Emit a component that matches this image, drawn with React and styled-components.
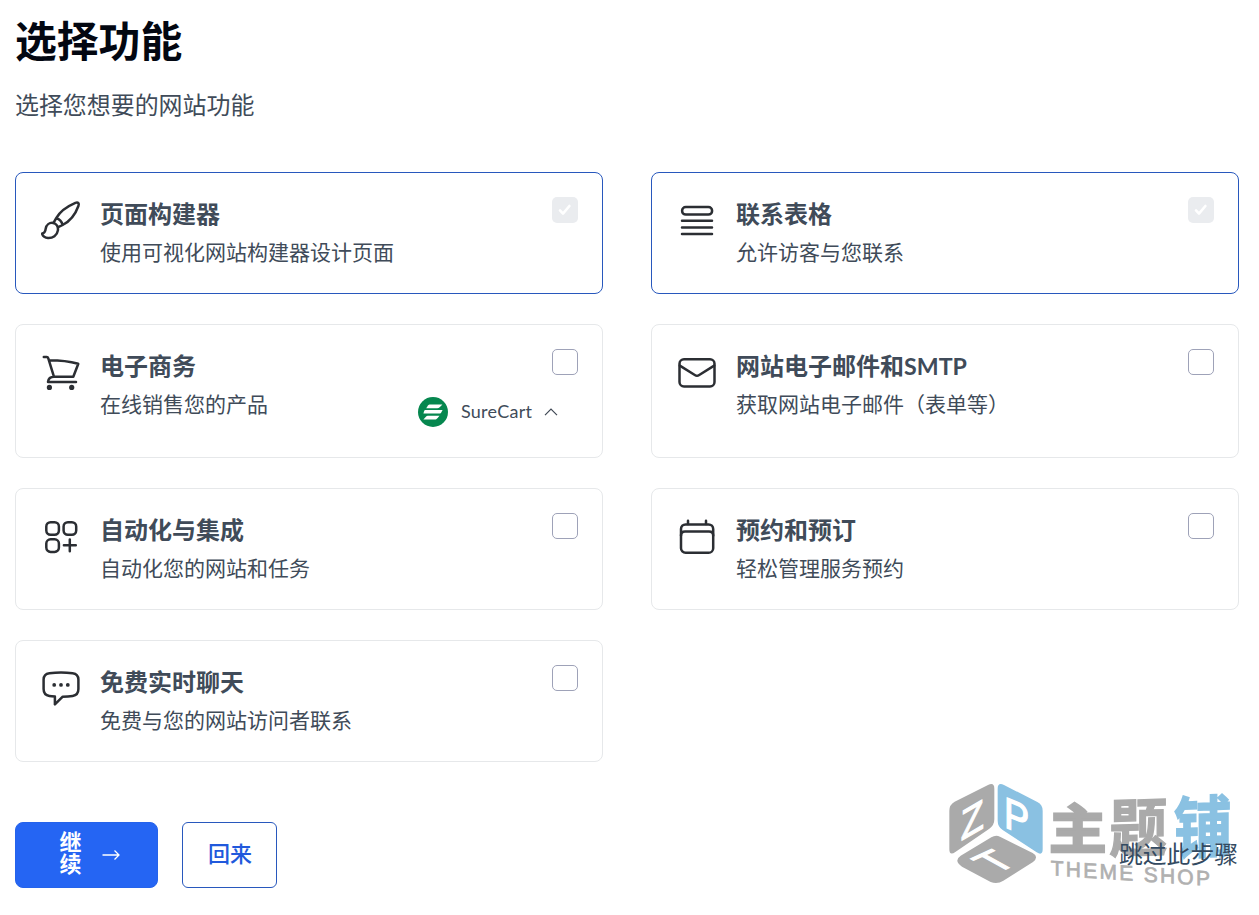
import React, { Component } from 'react'
import styled, { createGlobalStyle, css } from 'styled-components'

const GlobalStyle = createGlobalStyle`
  * {
    box-sizing: border-box;
  }

  body {
    margin: 0;
    background-color: #fff;
    font-family: Lato, 'Noto Sans CJK SC', sans-serif;
    color: #404b59;
  }
`

const Page = styled.main`
  position: relative;
  width: 1259px;
  height: 915px;
  padding: 16px 20px 0 15px;
  overflow: hidden;
`

const Title = styled.h1`
  margin: 0;
  color: #030711;
  font-size: 41.8px;
  font-weight: 700;
  line-height: 50px;
`

const Subtitle = styled.p`
  margin: 22px 0 50px;
  font-size: 23.95px;
  line-height: 34px;
`

const FeatureGrid = styled.div`
  display: grid;
  grid-template-columns: 588px 588px;
  grid-template-rows: 122px 134px 122px 122px;
  gap: 30px 48px;
`

const Card = styled.section`
  display: flex;
  padding: 24px;
  border: 1px solid ${props => (props.$active ? '#2858bd' : '#e6e8ea')};
  border-radius: 8px;
`

const CardIcon = styled.svg`
  flex-shrink: 0;
  width: 40px;
  height: 40px;
  margin: 3px 19px 0 1px;
  fill: none;
  stroke: #2b2e33;
  stroke-width: 2.5;
  stroke-linecap: round;
  stroke-linejoin: round;

  .solid {
    fill: #2b2e33;
    stroke: none;
  }
`

const CardBody = styled.div`
  flex: 1;
  white-space: nowrap;
`

const CardTitle = styled.h2`
  margin: 0;
  font-size: 24px;
  font-weight: 700;
  line-height: 34px;
`

const Latin = styled.span`
  font-size: 23.2px;
`

const CardText = styled.p`
  margin: 5px 0 0;
  font-size: 21px;
  line-height: 32px;
`

const CardSide = styled.div`
  display: flex;
  flex-direction: column;
  align-items: flex-end;
`

const CheckBox = styled.span`
  display: flex;
  align-items: center;
  justify-content: center;
  width: 26px;
  height: 26px;
  border-radius: 5px;
  ${props =>
    props.$checked
      ? css`
          background-color: #eaecef;
        `
      : css`
          border: 1px solid #9ea2b8;
        `}
`

const Provider = styled.div`
  display: flex;
  align-items: center;
  height: 30px;
  margin: 22px 20px 0 0;
  font-size: 18px;
  line-height: 28px;
`

const ProviderName = styled.span`
  width: 71px;
  margin: -2px 12px 0 13px;
  letter-spacing: 0.25px;
`

const Actions = styled.footer`
  display: flex;
  align-items: center;
  margin-top: 60px;
`

const Button = styled.button`
  display: flex;
  align-items: center;
  justify-content: center;
  height: 66px;
  padding: 0 0 7px 1px;
  border: 1px solid #2563eb;
  border-radius: 8px;
  font-family: inherit;
  font-size: 22px;
  font-weight: 500;
`

const NextButton = styled(Button)`
  width: 143px;
  gap: 20px;
  padding: 0 0 0 6px;
  background-color: #2565f3;
  color: #fff;
`

const NextLabel = styled.span`
  width: 22px;
  margin-bottom: 4px;
  line-height: 22px;
  font-weight: 700;
`

const BackButton = styled(Button)`
  width: 95px;
  margin-left: 24px;
  border-color: #2858bd;
  border-radius: 6px;
  background-color: #fff;
  color: #2159dc;
`

const SkipLink = styled.a`
  position: relative;
  z-index: 1;
  margin: 0 1px 2px auto;
  font-size: 23.8px;
  line-height: 34px;
  color: #334a61;
`

const Watermark = styled.svg`
  position: absolute;
  left: 930px;
  top: 770px;
  width: 329px;
  height: 130px;
  font-family: 'Liberation Sans', 'Noto Sans CJK SC', sans-serif;
`

const icons = {
  brush: (
    <>
      <path d="M15.2 18.2 C19 11.5 26 6.5 34.4 2.9 C37.3 1.9 38.4 3.6 37.4 6 C34.4 14.3 29.6 21 21.6 25 L17.2 27.2 M15.2 18.2 L12.8 22.4 M15.2 18.2 C18.6 19 20.8 21.4 21.6 25" />
      <path d="M1 33.6 C3.7 33.4 4.4 31.6 4.7 28.7 C5.3 24.8 8.5 22.5 12 22.9 C15.4 23.3 17.4 26.5 16.9 30.3 C16.2 35.4 11.7 38.2 7 38 C4 37.8 1.8 36.3 1 33.6 Z" />
    </>
  ),
  form: (
    <>
      <rect x="5.1" y="7.1" width="30" height="7.5" rx="3.7" />
      <path d="M5 20.8 H35 M5 27.4 H35 M5 34 H35" />
    </>
  ),
  cart: (
    <>
      <path d="M2.8 4.9 H5.7 C6.7 4.9 7 5.3 7.3 6.3 L13 24.8 H32.3 L37.3 11.8 C28 9.3 18.5 8.3 8.7 8.3 M13 24.8 C9.8 24.8 7.4 26.8 7 30 H35" />
      <circle className="solid" cx="8.4" cy="35.4" r="2.6" />
      <circle className="solid" cx="30.7" cy="35.4" r="2.6" />
    </>
  ),
  mail: (
    <>
      <rect x="2.5" y="7.2" width="35" height="27.2" rx="4.5" />
      <path d="M2.8 13.6 L17.8 23 C19.3 24 20.7 24 22.2 23 L37.2 13.6" />
    </>
  ),
  apps: (
    <>
      <rect x="5.3" y="6.2" width="12.6" height="12.6" rx="4.3" />
      <rect x="22.6" y="6.2" width="12.6" height="12.6" rx="4.3" />
      <rect x="5.3" y="23.3" width="12.6" height="12.6" rx="4.3" />
      <path d="M28.8 23.4 V35.3 M22.9 29.2 H34.8" />
    </>
  ),
  calendar: (
    <>
      <path d="M11 4.8 V8 M29 4.8 V8" />
      <rect x="4" y="8.4" width="32.2" height="28.4" rx="4.6" />
      <path d="M4 19.5 C4 16.9 5.4 15.6 8 15.6 H32 C34.8 15.6 36.2 16.9 36.2 19.5" />
    </>
  ),
  chat: (
    <>
      <path d="M8.4 5.2 C16 4.3 24 4.3 31.6 5.2 C35.2 5.7 37.4 8 37.4 11.6 V21 C37.4 25 35.2 27.4 31.6 27.9 C28.2 28.4 25 28.6 21.7 28.7 L13.9 36.4 V28.6 C12 28.4 10.2 28.2 8.4 27.9 C4.8 27.4 2.6 25 2.6 21 V11.6 C2.6 8 4.8 5.7 8.4 5.2 Z" />
      <circle className="solid" cx="13.2" cy="16.9" r="1.9" />
      <circle className="solid" cx="20" cy="16.9" r="1.9" />
      <circle className="solid" cx="26.8" cy="16.9" r="1.9" />
    </>
  )
}

const features = [
  { icon: 'brush', title: '页面构建器', text: '使用可视化网站构建器设计页面', checked: true },
  { icon: 'form', title: '联系表格', text: '允许访客与您联系', checked: true },
  { icon: 'cart', title: '电子商务', text: '在线销售您的产品', provider: 'SureCart' },
  { icon: 'mail', title: '网站电子邮件和', latin: 'SMTP', text: '获取网站电子邮件（表单等）' },
  { icon: 'apps', title: '自动化与集成', text: '自动化您的网站和任务' },
  { icon: 'calendar', title: '预约和预订', text: '轻松管理服务预约' },
  { icon: 'chat', title: '免费实时聊天', text: '免费与您的网站访问者联系' }
]

const ProviderSelect = ({ name }) => (
  <Provider>
    <svg width="30" height="30" viewBox="0 0 30 30">
      <circle cx="15" cy="15" r="15" fill="#06874f" />
      <g fill="#fff">
        <path d="M12.2 7.5 H24.4 L21.7 10.2 C21 10.9 20.2 11.2 19.2 11.2 H8.2 L10 8.5 C10.6 7.8 11.2 7.5 12.2 7.5 Z" />
        <path d="M7.2 13 H24.6 L23.5 15 C23 16 22.4 16.6 21.4 16.6 H5.4 L6 14.6 C6.3 13.5 6.6 13 7.2 13 Z" />
        <path d="M10.4 18.8 H21.5 L19.4 21.2 C18.6 22.1 17.9 22.5 17 22.5 H5.4 L7.7 19.9 C8.6 19 9.3 18.8 10.4 18.8 Z" />
      </g>
    </svg>
    <ProviderName>{name}</ProviderName>
    <svg width="14" height="8" viewBox="0 0 14 8" fill="none" stroke="#3f4854" strokeWidth="1.2">
      <path d="M1 7.2 L7 1.2 L13 7.2" />
    </svg>
  </Provider>
)

const Feature = ({ feature }) => (
  <Card $active={feature.checked}>
    <CardIcon viewBox="0 0 40 40">{icons[feature.icon]}</CardIcon>
    <CardBody>
      <CardTitle>
        {feature.title}
        {feature.latin && <Latin>{feature.latin}</Latin>}
      </CardTitle>
      <CardText>{feature.text}</CardText>
    </CardBody>
    <CardSide>
      <CheckBox $checked={feature.checked}>
        {feature.checked && (
          <svg width="14" height="12" viewBox="0 0 14 12" fill="none" stroke="#fff" strokeWidth="2.6">
            <path d="M2 6.4 L5 9.6 L11.4 2" strokeLinecap="round" strokeLinejoin="round" />
          </svg>
        )}
      </CheckBox>
      {feature.provider && <ProviderSelect name={feature.provider} />}
    </CardSide>
  </Card>
)

const ShopMark = () => (
  <Watermark viewBox="0 0 987 390">
    <g fill="#aaaaaa">
      <path d="M174 45 Q193 36 193 56 V148 Q193 166 178 176 L76 246 Q58 258 58 238 V122 Q58 104 74 95 Z" />
      <path d="M184 202 Q197 194 210 200 L308 249 Q328 260 309 276 L220 332 Q202 344 182 336 L96 290 Q70 272 92 257 Z" />
    </g>
    <path
      fill="#8ac1e2"
      d="M203 56 Q203 36 222 45 L322 96 Q338 104 338 122 V238 Q338 258 320 247 L218 180 Q203 170 203 152 Z"
    />
    <g fill="#fff" stroke="#fff" strokeWidth="4" fontSize="132">
      <text transform="matrix(0.86 -0.5 0 0.95 92 213)">Z</text>
      <text transform="matrix(0.86 0.36 0 1 222 170)">P</text>
      <text transform="matrix(0.85 -0.39 -0.87 -0.48 198 311) scale(1 -1)">T</text>
    </g>
    <g fontSize="176" fontWeight="700" strokeWidth="4">
      <g fill="#aaaaaa" stroke="#aaaaaa">
        <text strokeWidth="8" transform="matrix(0.98 0 0 0.92 357 237)">
          主
        </text>
        <text transform="matrix(0.99 -0.03 0 1.08 538 246)">题</text>
      </g>
      <text fill="#8ac1e2" stroke="#8ac1e2" transform="matrix(0.99 -0.04 0 1.14 731 249)">
        铺
      </text>
    </g>
    <text
      fill="#b0b0b0"
      stroke="#b0b0b0"
      strokeWidth="2"
      fontSize="63"
      textLength="478"
      transform="matrix(1 0.066 0 1 362 316)"
    >
      THEME SHOP
    </text>
  </Watermark>
)

class App extends Component {
  render() {
    return (
      <Page>
        <GlobalStyle />
        <Title>选择功能</Title>
        <Subtitle>选择您想要的网站功能</Subtitle>
        <FeatureGrid>
          {features.map(feature => (
            <Feature key={feature.icon} feature={feature} />
          ))}
        </FeatureGrid>
        <Actions>
          <NextButton>
            <NextLabel>继续</NextLabel>
            <svg width="18" height="12" viewBox="0 0 18 12" fill="none" stroke="#fff" strokeWidth="1.3">
              <path d="M0.5 6 H17 M12.5 1.5 L17 6 L12.5 10.5" />
            </svg>
          </NextButton>
          <BackButton>回来</BackButton>
          <SkipLink>跳过此步骤</SkipLink>
        </Actions>
        <ShopMark />
      </Page>
    )
  }
}

export default App
